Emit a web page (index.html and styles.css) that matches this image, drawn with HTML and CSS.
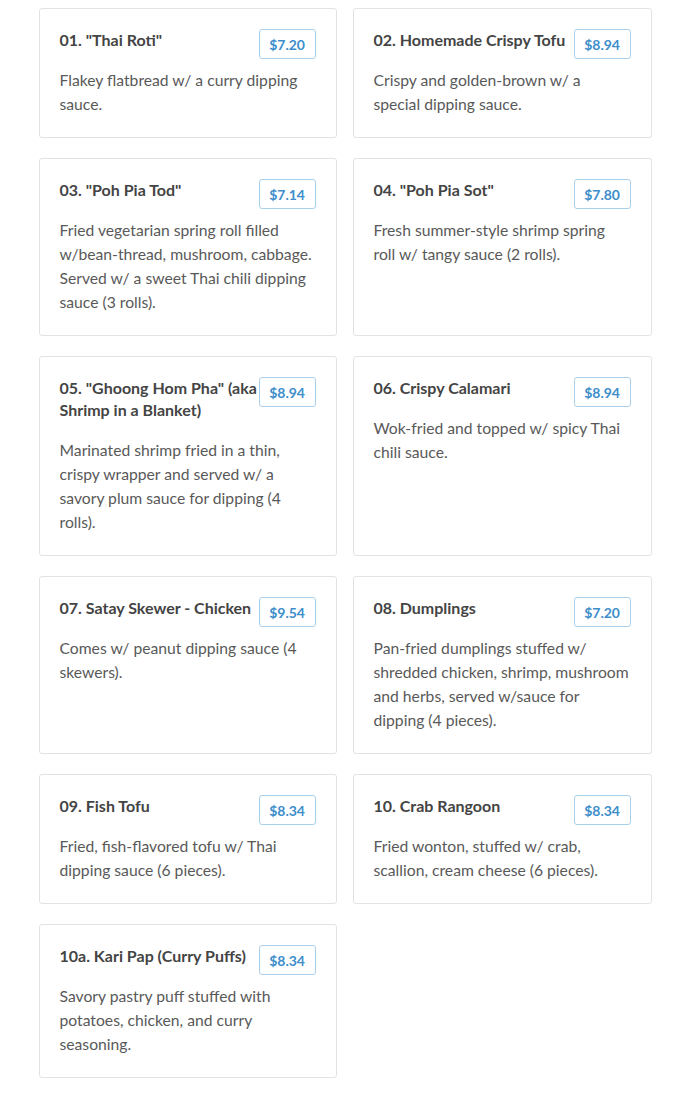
FILE: index.html
```html
<!DOCTYPE html>
<html lang="en">
<head>
<meta charset="utf-8">
<title>Appetizers</title>
<link rel="stylesheet" href="styles.css">
</head>
<body>
<div class="menu">
  <div class="card">
    <div class="head"><span class="price">$7.20</span><h3 class="title">01. "Thai Roti"</h3></div>
    <p class="desc">Flakey flatbread w/ a curry dipping sauce.</p>
  </div>
  <div class="card">
    <div class="head"><span class="price">$8.94</span><h3 class="title">02. Homemade Crispy Tofu</h3></div>
    <p class="desc">Crispy and golden-brown w/ a special dipping sauce.</p>
  </div>
  <div class="card">
    <div class="head"><span class="price">$7.14</span><h3 class="title">03. "Poh Pia Tod"</h3></div>
    <p class="desc">Fried vegetarian spring roll filled w/bean-thread, mushroom, cabbage. Served w/ a sweet Thai chili dipping sauce (3 rolls).</p>
  </div>
  <div class="card">
    <div class="head"><span class="price">$7.80</span><h3 class="title">04. "Poh Pia Sot"</h3></div>
    <p class="desc">Fresh summer-style shrimp spring roll w/ tangy sauce (2 rolls).</p>
  </div>
  <div class="card">
    <div class="head"><span class="price">$8.94</span><h3 class="title">05. "Ghoong Hom Pha" (aka Shrimp in a Blanket)</h3></div>
    <p class="desc">Marinated shrimp fried in a thin, crispy wrapper and served w/ a savory plum sauce for dipping (4 rolls).</p>
  </div>
  <div class="card">
    <div class="head"><span class="price">$8.94</span><h3 class="title">06. Crispy Calamari</h3></div>
    <p class="desc">Wok-fried and topped w/ spicy Thai chili sauce.</p>
  </div>
  <div class="card">
    <div class="head"><span class="price">$9.54</span><h3 class="title">07. Satay Skewer - Chicken</h3></div>
    <p class="desc">Comes w/ peanut dipping sauce (4 skewers).</p>
  </div>
  <div class="card">
    <div class="head"><span class="price">$7.20</span><h3 class="title">08. Dumplings</h3></div>
    <p class="desc">Pan-fried dumplings stuffed w/ shredded chicken, shrimp, mushroom and herbs, served w/sauce for dipping (4 pieces).</p>
  </div>
  <div class="card">
    <div class="head"><span class="price">$8.34</span><h3 class="title">09. Fish Tofu</h3></div>
    <p class="desc">Fried, fish-flavored tofu w/ Thai dipping sauce (6 pieces).</p>
  </div>
  <div class="card">
    <div class="head"><span class="price">$8.34</span><h3 class="title">10. Crab Rangoon</h3></div>
    <p class="desc">Fried wonton, stuffed w/ crab, scallion, cream cheese (6 pieces).</p>
  </div>
  <div class="card">
    <div class="head"><span class="price">$8.34</span><h3 class="title">10a. Kari Pap (Curry Puffs)</h3></div>
    <p class="desc">Savory pastry puff stuffed with potatoes, chicken, and curry seasoning.</p>
  </div>
</div>
</body>
</html>
```

FILE: styles.css
```css
* { box-sizing: border-box; }

html, body {
  margin: 0;
  padding: 0;
  background: #ffffff;
}

body {
  font-family: Lato, "Open Sans", "Liberation Sans", sans-serif;
  color: #555555;
}

.menu {
  width: 613px;
  margin: 0 auto;
  padding-top: 8px;
  display: grid;
  grid-template-columns: 298px 299px;
  column-gap: 16px;
  row-gap: 20px;
}

.card {
  border: 1px solid #e3e3e3;
  border-radius: 3px;
  padding: 20px 20px 21px;
  background: #fff;
}

.head {
  margin-bottom: 17px;
}

.price {
  float: right;
  margin-left: 1px;
  height: 30px;
  padding: 0 9.5px;
  border: 1px solid #a9d0ea;
  border-radius: 3px;
  color: #3d8ecb;
  font-size: 14px;
  font-weight: 700;
  line-height: 29px;
}

.title {
  margin: 0;
  font-size: 16px;
  font-weight: 700;
  line-height: 22px;
  color: #444444;
}

.desc {
  margin: 0;
  font-size: 15.7px;
  line-height: 24px;
  color: #595959;
}
```
